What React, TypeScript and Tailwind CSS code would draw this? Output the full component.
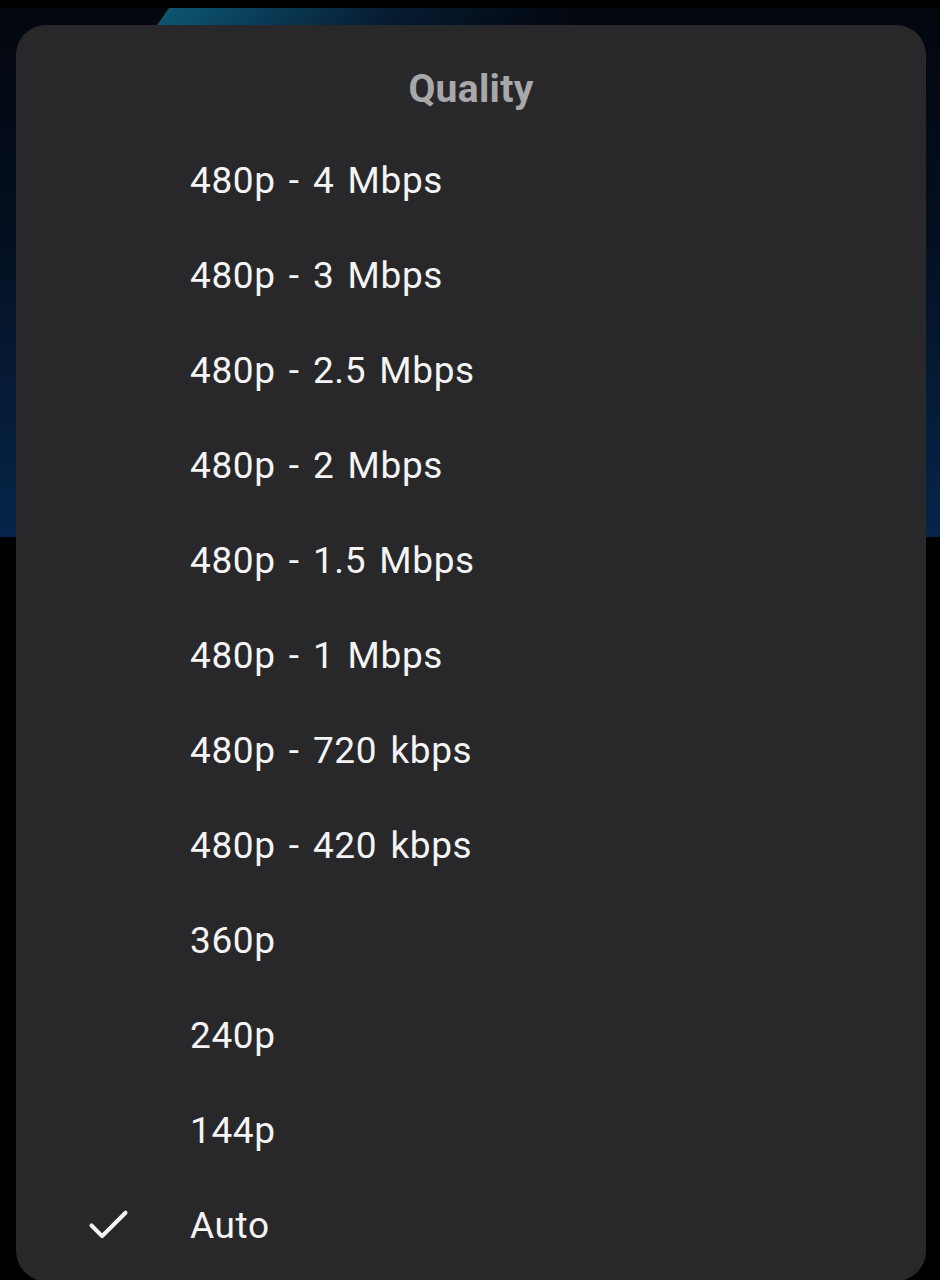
import React from "react";

const items = [
  "480p - 4 Mbps",
  "480p - 3 Mbps",
  "480p - 2.5 Mbps",
  "480p - 2 Mbps",
  "480p - 1.5 Mbps",
  "480p - 1 Mbps",
  "480p - 720 kbps",
  "480p - 420 kbps",
  "360p",
  "240p",
  "144p",
  "Auto",
];

export default function App() {
  return (
    <div
      className="relative h-[1280px] w-[940px] overflow-hidden bg-black"
      style={{ fontFamily: "Roboto, 'Noto Sans', sans-serif" }}
    >
      {/* video behind */}
      <div className="relative mt-[8px] h-[529px] w-full overflow-hidden bg-[linear-gradient(180deg,#03060d_0%,#041022_45%,#06254a_100%)]">
        <div className="absolute left-[155px] top-0 h-[40px] w-[420px] -skew-x-[35deg] bg-[linear-gradient(90deg,#0c5670_0%,#0a3a55_25%,#061a30_55%,rgba(3,8,18,0)_100%)]" />
      </div>

      {/* bottom sheet */}
      <div className="absolute left-[16px] top-[25px] h-[1256px] w-[910px] rounded-[30px] bg-[#28282a]">
        <div className="pt-[40px] text-center text-[39px] font-bold leading-[48px] tracking-[0.3px] text-[#a8a8aa]">
          Quality
        </div>
        <div className="mt-[20px] flex flex-col">
          {items.map((label) => (
            <div key={label} className="flex h-[95px] items-center">
              <div className="flex w-[174px] shrink-0 items-center pl-[67px]">
                {label === "Auto" && (
                  <svg width="51" height="51" viewBox="0 0 24 24" fill="none" stroke="#f4f4f4" strokeWidth="1.9" strokeLinecap="round" strokeLinejoin="round">
                    <path d="M20 6 9 17l-5-5" />
                  </svg>
                )}
              </div>
              <span className="text-[37px] leading-none tracking-[0.6px] [word-spacing:3.5px] text-[#f4f4f4]">{label}</span>
            </div>
          ))}
        </div>
      </div>
    </div>
  );
}
